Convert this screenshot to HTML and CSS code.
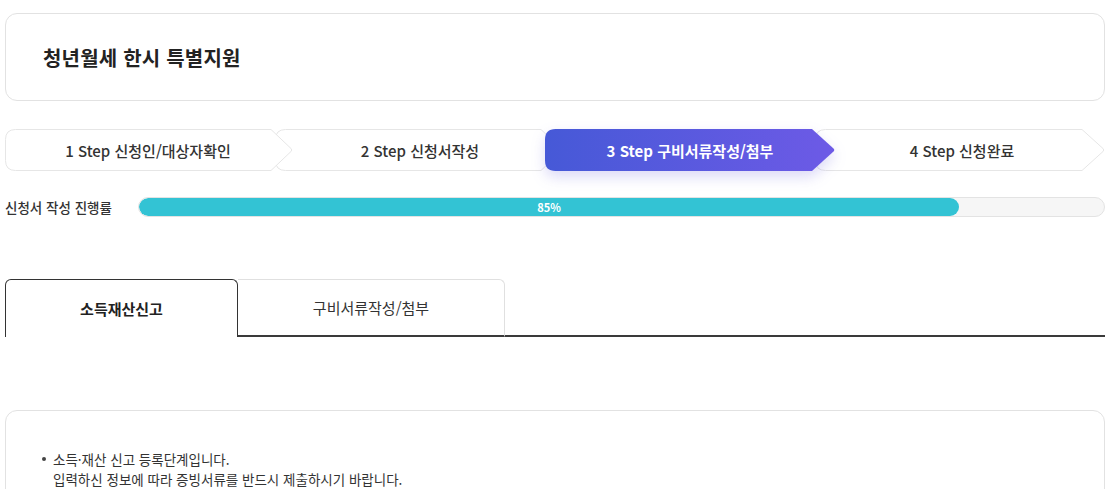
FILE: index.html
```html
<!DOCTYPE html>
<html lang="ko">
<head>
<meta charset="utf-8">
<title>청년월세 한시 특별지원</title>
<link rel="stylesheet" href="styles.css">
</head>
<body>
<div class="page">
  <div class="title-box">
    <h1 class="title">청년월세 한시 특별지원</h1>
  </div>

  <ol class="steps">
    <li class="step s1">
      <svg class="step-shape" width="290" height="42" viewBox="0 0 290 42"><path d="M10.5 0.5 H266 L286 19.5 Q287.5 21 286 22.5 L266 41.5 H10.5 Q0.5 41.5 0.5 31.5 V10.5 Q0.5 0.5 10.5 0.5 Z"/></svg>
      <span class="step-label">1 Step 신청인/대상자확인</span>
    </li>
    <li class="step s2">
      <svg class="step-shape" width="290" height="42" viewBox="0 0 290 42"><path d="M10.5 0.5 H266 L286 19.5 Q287.5 21 286 22.5 L266 41.5 H10.5 Q0.5 41.5 0.5 31.5 V10.5 Q0.5 0.5 10.5 0.5 Z"/></svg>
      <span class="step-label">2 Step 신청서작성</span>
    </li>
    <li class="step s3 active">
      <svg class="step-shape" width="290" height="42" viewBox="0 0 290 42">
        <defs><linearGradient id="g3" x1="0" y1="0" x2="1" y2="0"><stop offset="0" stop-color="#4659d7"/><stop offset="1" stop-color="#6d5ae6"/></linearGradient></defs>
        <path class="active-path" d="M10.5 0 H267 L288.5 19.5 Q290 21 288.5 22.5 L267 42 H10.5 Q0 42 0 31.5 V10.5 Q0 0 10.5 0 Z"/></svg>
      <span class="step-label">3 Step 구비서류작성/첨부</span>
    </li>
    <li class="step s4">
      <svg class="step-shape" width="290" height="42" viewBox="0 0 290 42"><path d="M10.5 0.5 H267 L288 19.5 Q289.5 21 288 22.5 L267 41.5 H10.5 Q0.5 41.5 0.5 31.5 V10.5 Q0.5 0.5 10.5 0.5 Z"/></svg>
      <span class="step-label">4 Step 신청완료</span>
    </li>
  </ol>

  <div class="progress-row">
    <span class="progress-label">신청서 작성 진행률</span>
    <div class="progress-track">
      <div class="progress-fill" style="width:85%">85%</div>
    </div>
  </div>

  <div class="tabs">
    <div class="tab active">소득재산신고</div>
    <div class="tab">구비서류작성/첨부</div>
    <div class="tab-rest"></div>
  </div>

  <div class="info-box">
    <ul class="info-list">
      <li>소득·재산 신고 등록단계입니다.<br>입력하신 정보에 따라 증빙서류를 반드시 제출하시기 바랍니다.</li>
    </ul>
  </div>
</div>
</body>
</html>
```

FILE: styles.css
```css
* { box-sizing: border-box; }
html, body { margin: 0; padding: 0; background: #fff; }
body {
  font-family: "Noto Sans CJK KR", "Noto Sans", sans-serif;
  color: #333;
  overflow: hidden;
}
.page {
  width: 1100px;
  margin-left: 5px;
  padding-top: 13px;
}
.title-box {
  height: 88px;
  border: 1px solid #e2e2e2;
  border-radius: 12px;
  display: flex;
  align-items: center;
  padding-left: 37px;
}
.title {
  margin: 0;
  font-size: 20px;
  font-weight: 700;
  color: #222;
  letter-spacing: 0.2px;
}

.steps {
  list-style: none;
  margin: 28px 0 0;
  padding: 0;
  display: flex;
}
.step {
  position: relative;
  width: 290px;
  height: 42px;
  flex: none;
  display: flex;
  align-items: center;
  justify-content: center;
}
.step + .step { margin-left: -20px; }
.s1 { z-index: 4; }
.s2 { z-index: 3; }
.s3 { z-index: 5; }
.s4 { z-index: 1; }
.s1 .step-label { left: -2px; }
.s4 .step-label { left: 2px; }
.step-shape {
  position: absolute;
  left: 0;
  top: 0;
}
.step-shape path {
  fill: #fff;
  stroke: #e6e6e6;
  stroke-width: 1;
}
.s3 .step-shape { filter: drop-shadow(0 6px 7px rgba(95, 85, 220, 0.22)); }
.step-shape .active-path { fill: url(#g3); stroke: none; }
.step-label {
  position: relative;
  font-size: 15px;
  font-weight: 500;
  color: #333;
}
.s3 .step-label { color: #fff; font-weight: 700; }

.progress-row {
  margin-top: 26px;
  display: flex;
  align-items: center;
  height: 20px;
}
.progress-label {
  width: 133px;
  font-size: 13.5px;
  font-weight: 500;
  color: #333;
}
.progress-track {
  flex: 1;
  height: 20px;
  border: 1px solid #e3e3e3;
  background: #f6f6f6;
  border-radius: 10px;
  overflow: hidden;
}
.progress-fill {
  height: 100%;
  background: #33c3d4;
  border-radius: 10px;
  color: #fff;
  font-size: 11px;
  font-weight: 700;
  display: flex;
  align-items: center;
  justify-content: center;
  line-height: 1;
}

.tabs {
  margin-top: 62px;
  display: flex;
  height: 58px;
}
.tab {
  display: flex;
  align-items: center;
  justify-content: center;
  font-size: 15px;
  color: #333;
}
.tab.active {
  width: 233px;
  border: 1px solid #333;
  border-bottom: none;
  border-radius: 6px 6px 0 0;
  font-weight: 700;
  color: #222;
}
.tab:not(.active) {
  width: 267px;
  border-top: 1px solid #e0e0e0;
  border-right: 1px solid #e0e0e0;
  border-radius: 0 6px 0 0;
  border-bottom: 2px solid #3a3a3a;
}
.tab-rest {
  flex: 1;
  border-bottom: 2px solid #3a3a3a;
}

.info-box {
  margin-top: 73px;
  height: 120px;
  border: 1px solid #e2e2e2;
  border-radius: 12px;
  padding: 38px 0 0 47px;
}
.info-list {
  margin: 0;
  padding: 0;
  list-style: none;
}
.info-list li {
  position: relative;
  font-size: 13.5px;
  line-height: 20px;
  color: #333;
}
.info-list li::before {
  content: "";
  position: absolute;
  left: -11px;
  top: 8px;
  width: 4px;
  height: 4px;
  border-radius: 50%;
  background: #444;
}
```
